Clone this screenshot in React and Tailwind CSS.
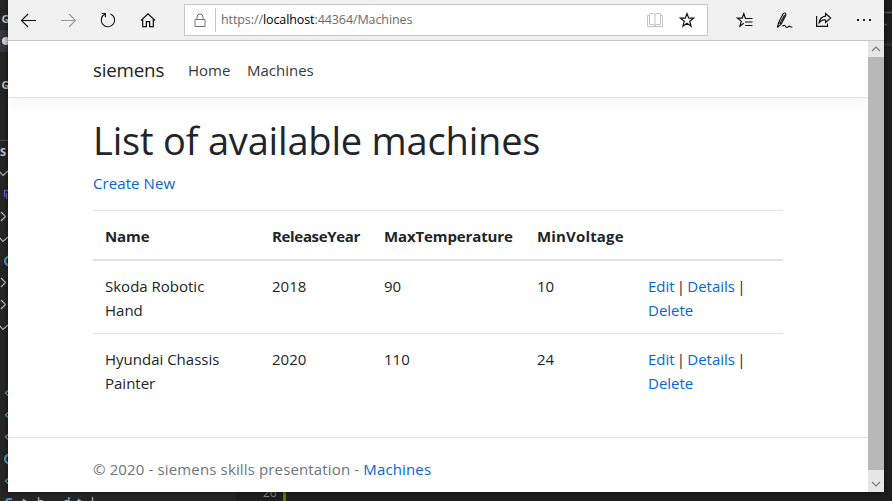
const machines = [
  { name: 'Skoda Robotic Hand', year: '2018', temp: '90', volt: '10' },
  { name: 'Hyundai Chassis Painter', year: '2020', temp: '110', volt: '24' },
];

const COLS = 'grid grid-cols-[167px_112px_153px_111px_147px]';

function Star({ className }) {
  return (
    <svg className={className} width="16" height="16" viewBox="0 0 16 16" fill="none" stroke="#111" strokeWidth="1.2">
      <path d="M8 1.6 L9.7 6.1 H14.6 L10.7 9.2 L12.1 14.2 L8 11.3 L3.9 14.2 L5.3 9.2 L1.4 6.1 H6.3 Z" />
    </svg>
  );
}

function Toolbar() {
  return (
    <div className="flex h-[41px] shrink-0 items-center border-b border-[#c9c9c9] bg-[#f1f1f1]">
      <svg className="ml-3" width="16" height="16" viewBox="0 0 16 16" fill="none" stroke="#111" strokeWidth="1.1">
        <path d="M1.5 8.5H16M8 2L1.5 8.5L8 15" />
      </svg>
      <svg className="ml-6" width="16" height="16" viewBox="0 0 16 16" fill="none" stroke="#999" strokeWidth="1.1">
        <path d="M1 8.5H15.5M9 2L15.5 8.5L9 15" />
      </svg>
      <svg className="ml-6" width="16" height="16" viewBox="0 0 16 16" fill="none" stroke="#111" strokeWidth="1.1">
        <path d="M10.5 1.9A6.7 6.7 0 1 1 5 2.1M1.8 1.5H5.4V5.2" />
      </svg>
      <svg className="ml-6" width="16" height="16" viewBox="0 0 16 16" fill="none" stroke="#111" strokeWidth="1.2">
        <path d="M1 8.5L8 1.8L15 8.5M2.7 7.5V14.6H6.4V9.6H9.6V14.6H13.3V7.5" />
      </svg>
      <div className="ml-[28px] flex h-8 w-[524px] items-center border border-[#c6c6c6] bg-white">
        <svg className="ml-[9px]" width="12" height="15" viewBox="0 0 12 15" fill="none" stroke="#777" strokeWidth="1">
          <path d="M1 6.5H11V13.5H1ZM3 6.5V4A3 3 0 0 1 9 4V6.5" />
        </svg>
        <div className="ml-[9px] h-6 w-px bg-[#c6c6c6]" />
        <span className="ml-[5px] mt-px whitespace-nowrap text-[12.5px] tracking-[-0.09px] text-[#6b6b6b]">
          https://<span className="text-black">localhost</span>:44364/Machines
        </span>
        <svg className="ml-auto" width="16" height="15" viewBox="0 0 16 15" fill="none" stroke="#c4c4c4" strokeWidth="1">
          <path d="M2.5 2.5H0.5V13.5H15.5V2.5H13.5M2.5 0.5H6.5L8 1.5L9.5 0.5H13.5V11.5H9.5L8 12.5L6.5 11.5H2.5ZM8 1.5V13" />
        </svg>
        <Star className="ml-4 mr-3" />
      </div>
      <svg className="ml-[28px]" width="17" height="16" viewBox="0 0 17 16" fill="none" stroke="#111" strokeWidth="1.2">
        <path d="M9.8 6.1H9.3L7.8 1.6L6.2 6.1H1.5L5.3 9.1L3.9 14.2L7.8 11.2M9 6.5H16.5M9 10H16.5M9 13.5H16.5" />
      </svg>
      <svg className="ml-[23px]" width="17" height="17" viewBox="0 0 17 17" fill="none" stroke="#111" strokeWidth="1.1">
        <path d="M1.3 15.5L2.6 10.5L6.8 2.4Q7.9 0.5 9.3 1.2Q10.3 2 9.5 4L5.3 12L1.3 15.5M2.6 10.5L5.3 12M4.4 10.8L8.6 3M6.5 14.2Q9 12.5 9.6 14.5Q10.5 16.5 12.5 14.5Q13.5 13.6 14.2 14.8L16.3 15.3" />
      </svg>
      <svg className="ml-[22px]" width="17" height="16" viewBox="0 0 17 16" fill="none" stroke="#111" strokeWidth="1.2">
        <path d="M1.6 4V14.4H12.5V11.5M10.6 1.5L15.6 6L10.6 10.4V8Q6.5 7.7 4.2 10.7Q5 4.7 10.6 4.2Z" />
      </svg>
      <div className="ml-[25px] flex gap-1">
        <i className="size-[2px] bg-[#222]" />
        <i className="size-[2px] bg-[#222]" />
        <i className="size-[2px] bg-[#222]" />
      </div>
    </div>
  );
}

function ScrollBar() {
  return (
    <div className="flex w-4 shrink-0 flex-col bg-[#e6e6e6]">
      <svg width="16" height="16" viewBox="0 0 16 16" fill="none" stroke="#777" strokeWidth="1.1">
        <path d="M4 10L8 6L12 10" />
      </svg>
      <div className="h-[413px] bg-[#b8b8b8]" />
      <svg className="mt-[5px]" width="16" height="16" viewBox="0 0 16 16" fill="none" stroke="#777" strokeWidth="1.1">
        <path d="M4 7L8 11L12 7" />
      </svg>
    </div>
  );
}

function Page() {
  return (
    <div className="flex min-w-0 flex-1 flex-col text-[15px] leading-6 text-[#212529]">
      <nav className="flex h-[57px] shrink-0 items-center border-b border-[#dee2e6] pl-[85px] pt-[2px] shadow-[0_4px_12px_rgba(0,0,0,0.05)]">
        <span className="w-[71px] text-[18.75px] tracking-[-0.2px] text-[#222]">siemens</span>
        <span className="ml-6 w-[43px] text-[#343a40]">Home</span>
        <span className="ml-4 text-[#343a40]">Machines</span>
      </nav>
      <main className="ml-[85px] mt-4 w-[690px]">
        <h1 className="mb-2 h-12 whitespace-nowrap text-[38px] leading-[53px] tracking-[-0.19px]">
          List of available machines
        </h1>
        <p className="mt-[9px] tracking-[0.08px] text-[#0366d6]">Create New</p>
        <div className="mt-[15px]">
          <div className={`${COLS} h-[51px] border-b-2 border-t border-[#dee2e6] pt-[13px] font-bold`}>
            <div className="pl-3 tracking-[-0.1px]">Name</div>
            <div className="pl-3 tracking-[-0.33px]">ReleaseYear</div>
            <div className="pl-3 tracking-[-0.12px]">MaxTemperature</div>
            <div className="pl-3 tracking-[0.16px]">MinVoltage</div>
          </div>
          {machines.map((m, i) => (
            <div key={m.name} className={`${COLS} pb-[11px] pt-[13px] ${i > 0 ? 'border-t border-[#dee2e6]' : ''}`}>
              <div className="pl-3 pr-10">{m.name}</div>
              <div className="px-3">{m.year}</div>
              <div className="px-3">{m.temp}</div>
              <div className="px-3">{m.volt}</div>
              <div className="px-3 [word-spacing:-1.7px]">
                <a className="text-[#0366d6]">Edit</a> | <a className="text-[#0366d6]">Details</a> |<br />
                <a className="text-[#0366d6]">Delete</a>
              </div>
            </div>
          ))}
        </div>
      </main>
      <footer className="mt-auto h-[55px] border-t border-[#dee2e6] pl-[85px] pt-[19px] tracking-[0.14px] text-[#6c757d]">
        © 2020 - siemens skills presentation - <a className="text-[#0366d6]">Machines</a>
      </footer>
    </div>
  );
}

function EditorBehind() {
  return (
    <svg className="absolute inset-0" width="892" height="501" viewBox="0 0 892 501" fill="none">
      <path d="M0 0H236V501H0Z" fill="#252526" />
      <path d="M0 30H8V52H0Z" fill="#37373d" />
      <circle cx="6" cy="41" r="4" fill="#d4d4d4" />
      <path d="M0 140.500H8" stroke="#4a4a4b" />
      <g fill="#c5c5c5" fontSize="11" fontWeight="700">
        <text x="1.500" y="23">G</text>
        <text x="1.500" y="89">G</text>
        <text x="0" y="156">S</text>
      </g>
      <g stroke="#bbb" strokeWidth="1.100">
        <path d="M-1 171L3 175.500L8 171M-1 237L3 241.500L8 237M-1 325L3 329.500L8 325" />
        <path d="M1 212L5.500 216.500L1 221M1 278L5.500 282.500L1 287M1 300L5.500 304.500L1 309" />
      </g>
      <path d="M4.500 197V190.500H8M6.500 199V193" stroke="#7a55c7" strokeWidth="1.300" />
      <g stroke="#4a9cc7" strokeWidth="1.300">
        <path d="M8 390.500L5.500 393L8 395.500M8 412.500L5.500 415L8 417.500M8 434.500L5.500 437L8 439.500M8 478.500L5.500 481L8 483.500" />
        <path d="M8.500 256.500Q5 258 5 261T8.500 265.500M8.500 454.500Q5 456 5 459T8.500 463.500" strokeWidth="2" />
      </g>
      <text x="4" y="508" fill="#4a9cc7" fontSize="14" fontWeight="700">C</text>
      <text x="22 37 63 77 91" y="507" fill="#ccc" fontSize="12">tbdtl</text>
      <text x="263" y="497" fill="#858585" fontSize="12">26</text>
      <path d="M284.500 492V501" stroke="#587c0c" strokeWidth="3" />
      <path d="M884 12.500H892M884 24.500H887" stroke="#555" strokeWidth="1.500" />
      <path d="M884 44.500H892" stroke="#1f3550" strokeWidth="2" />
    </svg>
  );
}

export default function App() {
  return (
    <div className="relative h-[501px] w-[892px] overflow-hidden bg-[#1e1e1e] font-['Open_Sans','Noto_Sans',sans-serif]">
      <EditorBehind />
      <div className="relative ml-2 flex h-[492px] w-[876px] flex-col bg-white shadow-[0_0_5px_rgba(0,0,0,0.6)]">
        <Toolbar />
        <div className="flex min-h-0 flex-1">
          <Page />
          <ScrollBar />
        </div>
      </div>
    </div>
  );
}
